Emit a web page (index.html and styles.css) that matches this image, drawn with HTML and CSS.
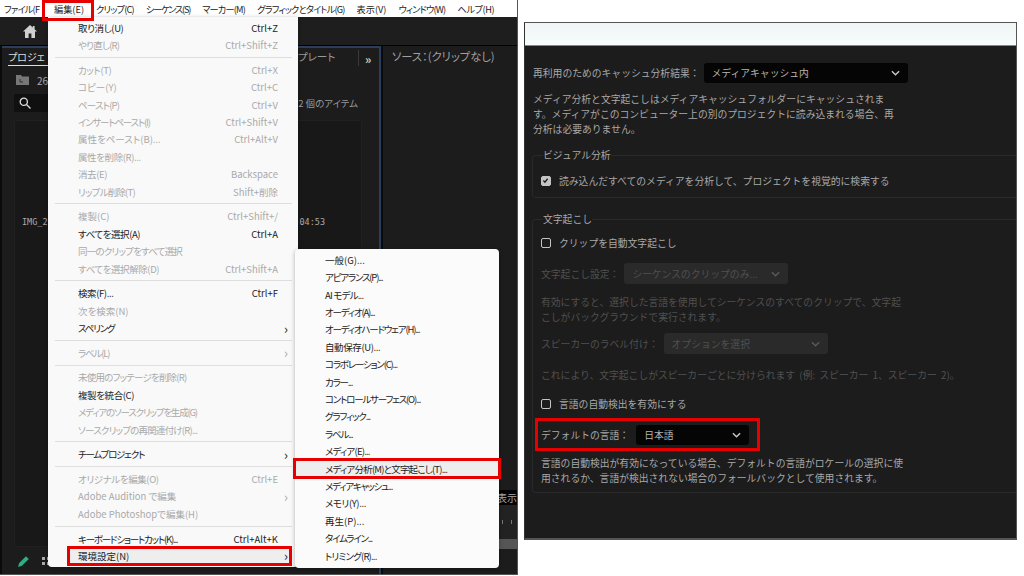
FILE: index.html
```html
<!DOCTYPE html>
<html lang="ja">
<head>
  <meta charset="UTF-8" />
  <meta name="viewport" content="width=device-width, initial-scale=1.0"/>
  <title>環境設定</title>
  <link rel="stylesheet" href="styles.css">
</head>
<body>

  <div class="app">
    <nav class="menubar">
      <span class="menubar-first tighter">ファイル(F</span>
      <span class="marked-top">編集(E)</span>
      <span class="tighter">クリップ(C)</span>
      <span class="tightest">シーケンス(S)</span>
      <span class="tighter">マーカー(M)</span>
      <span class="tighter">グラフィックとタイトル(G)</span>
      <span>表示(V)</span>
      <span class="tighter">ウィンドウ(W)</span>
      <span class="tight">ヘルプ(H)</span>
    </nav>

    <div class="toolbar">
      <svg class="home-icon" viewBox="0 0 14 13"><path d="M7 0 0 6.5h2V13h3.6V8.6h2.8V13H12V6.5h2L11.600 4.200V1h-1.800v1.400z"/></svg>
    </div>

    <div class="workspace">
      <section class="project">
        <div class="tabs">
          <span class="tab-active">プロジェ</span>
          <span class="tab-right">プレート</span>
          <span class="tab-more">»</span>
        </div>
        <div class="folder-row">
          <svg class="folder-icon" viewBox="0 0 13 10"><path d="M0 0h5l1 1.500h7V10H0z"/><path d="M4 4v3h3" fill="none" stroke="#333"/></svg>
          <span>26</span>
        </div>
        <div class="search-row">
          <div class="search-box">
            <svg class="search-icon" viewBox="0 0 12 12"><circle cx="4.800" cy="4.800" r="3.600"/><path d="m7.500 7.500 4 4"/></svg>
          </div>
          <span class="item-count">2 個のアイテム</span>
        </div>
        <div class="clip-list">
          <div class="clip-row">
            <span>IMG_2</span>
            <span>04:53</span>
          </div>
        </div>
        <div class="project-footer">
          <svg class="pencil-icon" viewBox="0 0 12 12"><path d="M0 12 1.200 8 8 1.200 10.800 4 4 10.800z"/></svg>
          <svg class="grid-icon" viewBox="0 0 10 8"><path d="M0 0h3v3H0zM0 5h3v3H0zM5 0h3v3H5zM5 5h3v3H5z"/></svg>
        </div>
      </section>

      <div class="right-col">
        <section class="source">ソース：(クリップなし)</section>
        <section class="timeline">
          <div class="timeline-head">本表示</div>
          <div class="timeline-ruler"><i></i><i></i></div>
          <div class="timeline-bar"></div>
        </section>
      </div>
    </div>

    <!-- edit menu -->
    <div class="menu edit-menu">
      <div class="row"><span class="tight">取り消し(U)</span><span>Ctrl+Z</span></div>
      <div class="row off"><span class="tighter">やり直し(R)</span><span>Ctrl+Shift+Z</span></div>
      <div class="sep"></div>
      <div class="row off"><span class="tight">カット(T)</span><span>Ctrl+X</span></div>
      <div class="row off"><span>コピー(Y)</span><span>Ctrl+C</span></div>
      <div class="row off"><span class="tighter">ペースト(P)</span><span>Ctrl+V</span></div>
      <div class="row off"><span class="tightest">インサートペースト(I)</span><span>Ctrl+Shift+V</span></div>
      <div class="row off"><span>属性をペースト(B)...</span><span>Ctrl+Alt+V</span></div>
      <div class="row off"><span class="tight">属性を削除(R)...</span></div>
      <div class="row off"><span class="tight">消去(E)</span><span>Backspace</span></div>
      <div class="row off"><span class="tighter">リップル削除(T)</span><span>Shift+削除</span></div>
      <div class="sep"></div>
      <div class="row off"><span>複製(C)</span><span>Ctrl+Shift+/</span></div>
      <div class="row"><span class="tight">すべてを選択(A)</span><span>Ctrl+A</span></div>
      <div class="row off"><span class="tighter">同一のクリップをすべて選択</span></div>
      <div class="row off"><span class="tight">すべてを選択解除(D)</span><span>Ctrl+Shift+A</span></div>
      <div class="sep"></div>
      <div class="row"><span class="tight">検索(F)...</span><span>Ctrl+F</span></div>
      <div class="row off"><span>次を検索(N)</span></div>
      <div class="row"><span class="tightest">スペリング</span><span class="arrow">›</span></div>
      <div class="sep"></div>
      <div class="row off"><span class="tightest">ラベル(L)</span><span class="arrow">›</span></div>
      <div class="sep"></div>
      <div class="row off"><span class="tighter">未使用のフッテージを削除(R)</span></div>
      <div class="row"><span class="tight">複製を統合(C)</span></div>
      <div class="row off"><span class="tightest">メディアのソースクリップを生成(G)</span></div>
      <div class="row off"><span class="tighter">ソースクリップの再関連付け(R)...</span></div>
      <div class="sep"></div>
      <div class="row"><span class="tightest">チームプロジェクト</span><span class="arrow">›</span></div>
      <div class="sep"></div>
      <div class="row off"><span class="tight">オリジナルを編集(O)</span><span>Ctrl+E</span></div>
      <div class="row off"><span>Adobe Audition で編集</span><span class="arrow">›</span></div>
      <div class="row off"><span>Adobe Photoshopで編集(H)</span></div>
      <div class="sep"></div>
      <div class="row"><span class="tightest">キーボードショートカット(K)...</span><span>Ctrl+Alt+K</span></div>
      <div class="row marked prefs-row"><span>環境設定(N)</span><span class="arrow">›</span></div>
    </div>

    <!-- preferences submenu -->
    <div class="menu sub-menu">
      <div class="row"><span>一般(G)...</span></div>
      <div class="row"><span class="tightest">アピアランス(P)...</span></div>
      <div class="row"><span class="tighter">AI モデル...</span></div>
      <div class="row"><span class="tightest">オーディオ(A)...</span></div>
      <div class="row"><span class="tightest">オーディオハードウェア(H)...</span></div>
      <div class="row"><span class="tight">自動保存(U)...</span></div>
      <div class="row"><span class="tightest">コラボレーション(C)...</span></div>
      <div class="row"><span class="tightest">カラー...</span></div>
      <div class="row"><span class="tightest">コントロールサーフェス(O)...</span></div>
      <div class="row"><span class="tightest">グラフィック...</span></div>
      <div class="row"><span class="tightest">ラベル...</span></div>
      <div class="row"><span class="tighter">メディア(E)...</span></div>
      <div class="row marked media-row"><span class="tighter">メディア分析(M)と文字起こし(T)...</span></div>
      <div class="row"><span class="tightest">メディアキャッシュ...</span></div>
      <div class="row"><span class="tight">メモリ(Y)...</span></div>
      <div class="row"><span>再生(P)...</span></div>
      <div class="row"><span class="tightest">タイムライン...</span></div>
      <div class="row"><span class="tighter">トリミング(R)...</span></div>
    </div>
  </div>

  <main class="prefs">
    <div class="prefs-band"></div>
    <div class="prefs-body">
      <div class="field cache-field">
        <label class="field-label">再利用のためのキャッシュ分析結果：</label>
        <div class="select cache-select">
          <span>メディアキャッシュ内</span>
          <svg class="chevron" viewBox="0 0 10 6"><path d="m1 1 4 4 4-4"/></svg>
        </div>
      </div>
      <p class="note cache-note">メディア分析と文字起こしはメディアキャッシュフォルダーにキャッシュされま<br>す。メディアがこのコンピューター上の別のプロジェクトに読み込まれる場合、再<br>分析は必要ありません。</p>

      <fieldset class="group visual-group">
        <legend>ビジュアル分析</legend>
        <div class="check">
          <span class="box checked"><svg viewBox="0 0 10 10"><path d="m2 5 2.200 2.400L8 2.500"/></svg></span>
          <span>読み込んだすべてのメディアを分析して、プロジェクトを視覚的に検索する</span>
        </div>
      </fieldset>

      <fieldset class="group speech-group">
        <legend>文字起こし</legend>
        <div class="check">
          <span class="box"></span>
          <span>クリップを自動文字起こし</span>
        </div>
        <div class="field disabled settings-field">
          <label class="field-label">文字起こし設定：</label>
          <div class="select wide-select">
            <span>シーケンスのクリップのみ...</span>
            <svg class="chevron" viewBox="0 0 10 6"><path d="m1 1 4 4 4-4"/></svg>
          </div>
        </div>
        <p class="note disabled settings-note">有効にすると、選択した言語を使用してシーケンスのすべてのクリップで、文字起<br>こしがバックグラウンドで実行されます。</p>
        <div class="field disabled speaker-field">
          <label class="field-label">スピーカーのラベル付け：</label>
          <div class="select wide-select">
            <span>オプションを選択</span>
            <svg class="chevron" viewBox="0 0 10 6"><path d="m1 1 4 4 4-4"/></svg>
          </div>
        </div>
        <p class="note disabled speaker-note">これにより、文字起こしがスピーカーごとに分けられます (例: スピーカー 1、スピーカー 2)。</p>
        <div class="check detect-check">
          <span class="box"></span>
          <span>言語の自動検出を有効にする</span>
        </div>
        <div class="field lang-field">
          <label class="field-label">デフォルトの言語：</label>
          <div class="select lang-select">
            <span>日本語</span>
            <svg class="chevron" viewBox="0 0 10 6"><path d="m1 1 4 4 4-4"/></svg>
          </div>
        </div>
        <p class="note lang-note">言語の自動検出が有効になっている場合、デフォルトの言語がロケールの選択に使<br>用されるか、言語が検出されない場合のフォールバックとして使用されます。</p>
      </fieldset>
    </div>
  </main>

</body>
</html>
```

FILE: styles.css
```css
*,
*::before,
*::after {
  box-sizing: border-box;
}

body {
  margin: 0;
  height: 576px;
  overflow: hidden;
  display: flex;
  align-items: flex-start;
  background: white;
  font-family: "Noto Sans CJK JP", "Noto Sans", sans-serif;
}

/* kana runs narrower in the original UI font */
.tight {
  letter-spacing: -0.4px;
}

.tighter {
  letter-spacing: -0.8px;
}

.tightest {
  letter-spacing: -1.200px;
}

/* left screenshot */
.app {
  position: relative;
  width: 518px;
  height: 575px;
  flex-shrink: 0;
  display: flex;
  flex-direction: column;
  background: #1c1c1c;
  border-right: 1px solid #555;
  border-bottom: 1px solid #555;
  overflow: hidden;
}

.menubar {
  height: 17px;
  flex-shrink: 0;
  display: flex;
  align-items: center;
  gap: 12px;
  padding-left: 4px;
  background: white;
  color: #222;
  font-size: 9.200px;
  font-feature-settings: "palt";
  white-space: nowrap;
}

.menubar span {
  flex-shrink: 0;
}

.menubar .menubar-first {
  width: 38px;
  overflow: hidden;
}

.marked-top {
  position: relative;
  z-index: 5;
}

.marked-top::after {
  content: "";
  position: absolute;
  left: -12px;
  right: -10px;
  top: -2px;
  height: 21px;
  border: 3px solid #e60000;
}

.toolbar {
  height: 29px;
  flex-shrink: 0;
  display: flex;
  align-items: center;
  padding-left: 23px;
  background: #1e1e1e;
  border-bottom: 1px solid #000;
}

.home-icon {
  width: 14px;
  height: 13px;
  fill: #d0d0d0;
}

.workspace {
  flex: 1;
  display: flex;
  min-height: 0;
  background: #0b0b0b;
}

.project {
  width: 379px;
  display: flex;
  flex-direction: column;
  margin-left: 2px;
  padding: 0 17px 0 12px;
  background: #1c1c1c;
  border-top: 2px solid #2b3f5c;
  border-right: 2px solid #2b3f5c;
  color: #aaa;
  font-size: 10px;
}

.tabs {
  height: 18px;
  margin: 0 -13px 0 -6px;
  display: flex;
  align-items: flex-end;
  font-size: 10px;
  font-feature-settings: "palt";
  color: #999;
}

.tab-active {
  width: 70px;
  color: #ddd;
  line-height: 14px;
  padding: 0 0 1px 0;
  border-bottom: 1px solid #ddd;
}

.tab-right {
  margin-left: 220px;
  width: 61px;
  line-height: 14px;
  font-size: 10.500px;
  padding-bottom: 2px;
  border-right: 1px solid #3a3a3a;
}

.tab-more {
  margin-left: 6px;
  color: #ccc;
  font-weight: bold;
  font-size: 12px;
  line-height: 14px;
}

.folder-row {
  height: 28px;
  display: flex;
  align-items: center;
  gap: 8px;
  padding-left: 2px;
  color: #aaa;
}

.folder-icon {
  width: 13px;
  height: 10px;
  fill: #777;
}

.search-row {
  height: 18px;
  display: flex;
  align-items: center;
  justify-content: space-between;
  padding-right: 4px;
}

.search-box {
  width: 200px;
  height: 18px;
  display: flex;
  align-items: center;
  padding-left: 5px;
  background: #101010;
  border-radius: 2px;
}

.search-icon {
  width: 12px;
  height: 12px;
  fill: none;
  stroke: #ddd;
  stroke-width: 1.300;
}

.item-count {
  font-size: 9.500px;
  font-feature-settings: "palt";
  color: #999;
}

.clip-list {
  flex: 1;
  margin-top: 8px;
  padding: 94px 36px 0 7px;
  background: #181818;
  border: 1px solid #202020;
}

.clip-row {
  display: flex;
  justify-content: space-between;
  font-family: "DejaVu Sans Mono", monospace;
  font-size: 8.500px;
  line-height: 14px;
  color: #aaa;
}

.project-footer {
  height: 27px;
  display: flex;
  align-items: center;
  gap: 12px;
  padding-left: 4px;
}

.pencil-icon {
  width: 12px;
  height: 12px;
  fill: #2fae7f;
}

.grid-icon {
  width: 10px;
  height: 8px;
  fill: #aaa;
}

.right-col {
  flex: 1;
  display: flex;
  flex-direction: column;
  margin-left: 2px;
  background: #1c1c1c;
}

.source {
  flex: 1;
  padding: 2px 0 0 9px;
  color: #a0a0a0;
  font-size: 11.300px;
  font-feature-settings: "palt";
  line-height: 16px;
  white-space: nowrap;
}

.timeline {
  height: 84px;
  background: #1c1c1c;
}

.timeline-head {
  height: 15px;
  background: #050505;
  color: #aaa;
  font-size: 10px;
  line-height: 15px;
  text-align: right;
  overflow: hidden;
}

.timeline-ruler {
  height: 34px;
  display: flex;
  align-items: center;
  justify-content: flex-end;
  gap: 8px;
  padding-right: 5px;
  background: #222;
}

.timeline-ruler i {
  width: 1px;
  height: 4px;
  background: #777;
}

.timeline-bar {
  height: 10px;
  background: #555;
}

/* menus */
.menu {
  position: absolute;
  padding-top: 2px;
  background: #f9f9f9;
  border-radius: 4px;
  box-shadow: 0 1px 4px rgba(0, 0, 0, 0.3);
  font-size: 9.500px;
  font-feature-settings: "palt";
  color: #222;
  white-space: nowrap;
}

.edit-menu {
  left: 48px;
  top: 17px;
  width: 250px;
  height: 550px;
  border-radius: 0 0 4px 4px;
}

.sub-menu {
  left: 295px;
  top: 249px;
  width: 204px;
  height: 319px;
  background: #fbfbfb;
}

.row {
  position: relative;
  height: 17.410px;
  display: flex;
  align-items: center;
  justify-content: space-between;
  padding: 0 20px 0 30px;
}

.off {
  color: #a9a9a9;
}

.arrow {
  margin-right: -10px;
  font-size: 13px;
  line-height: 13px;
}

.sep {
  height: 1px;
  margin: 3.150px 6px 3.150px 7px;
  background: #dedede;
}

.marked {
  z-index: 2;
}

.marked::before {
  content: "";
  position: absolute;
  z-index: -1;
  background: #eeeeee;
}

.marked::after {
  content: "";
  position: absolute;
  border: 3px solid #e60000;
}

.prefs-row::before,
.prefs-row::after {
  left: 19px;
  right: 6px;
  top: -1px;
  height: 20px;
}

.media-row::before,
.media-row::after {
  left: -2px;
  right: -2px;
  top: -1.500px;
  height: 21px;
}

/* right screenshot */
.prefs {
  width: 493px;
  height: 518px;
  flex-shrink: 0;
  margin: 22px 0 0 6px;
  display: flex;
  flex-direction: column;
  background: #1c1c1c;
  border: 1px solid #555;
  border-bottom-width: 2px;
  border-left-color: #333;
  overflow: hidden;
}

.prefs-band {
  height: 23px;
  flex-shrink: 0;
  background: linear-gradient(#f0f6f5, #f6fbfb);
  border-bottom: 1px solid #888;
}

.prefs-body {
  padding: 17px 0 0 8px;
  color: #a8a8a8;
  font-size: 9.800px;
}

.field {
  display: flex;
  align-items: center;
}

.field-label {
  white-space: nowrap;
}

.select {
  display: flex;
  align-items: center;
  justify-content: space-between;
  padding: 0 8px;
  background: #050505;
  border-radius: 3px;
  color: #b4b4b4;
}

.chevron {
  width: 9px;
  height: 6px;
  fill: none;
  stroke: #c8c8c8;
  stroke-width: 1.600;
}

.cache-select {
  width: 204px;
  height: 20px;
  margin-left: 4px;
}

.note {
  margin: 0;
  line-height: 15px;
  white-space: nowrap;
}

.cache-note {
  margin-top: 9px;
}

.group {
  min-width: 0;
  margin: 0 -3px 0 -1px;
  padding: 0 0 0 8px;
  border: 1px solid #292929;
  border-radius: 3px;
}

.group legend {
  margin-left: 2px;
  padding: 0;
  line-height: 14px;
  color: #a8a8a8;
}

.visual-group {
  margin-top: 11px;
  padding-top: 11px;
  padding-bottom: 8px;
}

.speech-group {
  margin-top: 14px;
  padding-top: 9px;
  padding-bottom: 6px;
}

.check {
  height: 16px;
  display: flex;
  align-items: center;
  gap: 8px;
}

.box {
  width: 10px;
  height: 10px;
  flex-shrink: 0;
  border: 1.500px solid #c4c4c4;
  border-radius: 2px;
}

.box.checked {
  background: #c4c4c4;
}

.box svg {
  display: block;
  width: 7px;
  height: 7px;
  fill: none;
  stroke: #1c1c1c;
  stroke-width: 1.800;
}

.disabled {
  color: #505050;
}

.disabled .select {
  background: #2a2a2a;
  color: #505050;
}

.disabled .chevron {
  stroke: #5a5a5a;
}

.wide-select {
  width: 164px;
  height: 21px;
  margin-left: 5px;
}

.settings-field {
  margin-top: 12px;
}

.settings-note {
  margin-top: 11px;
}

.speaker-field {
  margin-top: 8px;
}

.speaker-note {
  margin-top: 14px;
  word-spacing: 2px;
}

.detect-check {
  margin-top: 13px;
}

.lang-field {
  width: 225px;
  height: 33px;
  margin: 6px 0 0 -6px;
  padding-left: 3px;
  border: 3px solid #e60000;
}

.lang-select {
  width: 113px;
  height: 20px;
  margin-left: 7px;
}

.lang-note {
  margin-top: 5px;
}
```
